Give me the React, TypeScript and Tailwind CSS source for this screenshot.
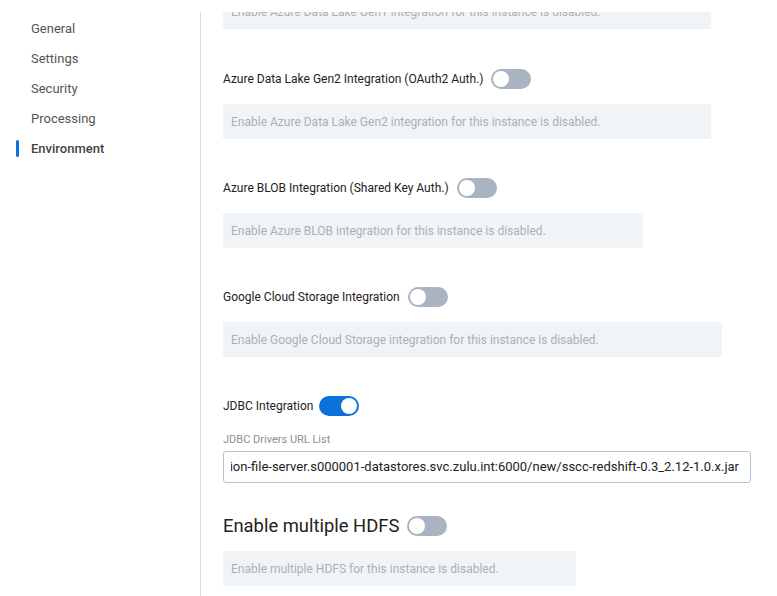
import React from "react";

const font = { fontFamily: "Roboto, 'Liberation Sans', sans-serif" };

function Toggle({ on = false }: { on?: boolean }) {
  return (
    <div
      className={
        "relative h-[20px] w-[40px] shrink-0 rounded-full " +
        (on ? "bg-[#0b72d9]" : "bg-[#a9b3c1]")
      }
    >
      <div
        className={
          "absolute top-[2px] h-[16px] w-[16px] rounded-full bg-white " +
          (on ? "left-[22px]" : "left-[2px]")
        }
      />
    </div>
  );
}

function Section({
  label,
  desc,
  boxW,
  big = false,
}: {
  label: string;
  desc: string;
  boxW: string;
  big?: boolean;
}) {
  return (
    <div className="flex flex-col">
      <div className="flex h-[20px] items-center gap-[8px]">
        <span
          className={
            big ? "text-[18.4px] text-[#222]" : "text-[12px] text-[#222]"
          }
        >
          {label}
        </span>
        <Toggle />
      </div>
      <div
        className={
          "mt-[15px] flex h-[35px] items-center bg-[#f1f4f7] px-[8px] text-[12px] text-[#abb0b8] " +
          boxW
        }
      >
        {desc}
      </div>
    </div>
  );
}

export default function App() {
  const items = ["General", "Settings", "Security", "Processing", "Environment"];
  return (
    <div className="flex h-[596px] w-[777px] overflow-hidden bg-white" style={font}>
      <div className="w-[200px] shrink-0 pt-[14px]">
        {items.map((it) => {
          const active = it === "Environment";
          return (
            <div key={it} className="relative flex h-[30px] items-center pl-[31px]">
              {active && (
                <div className="absolute left-[16px] top-[6px] h-[17px] w-[3px] rounded-full bg-[#0b72d9]" />
              )}
              <span
                className={
                  active
                    ? "text-[13px] font-medium text-[#444]"
                    : "text-[13px] text-[#555]"
                }
              >
                {it}
              </span>
            </div>
          );
        })}
      </div>
      <div className="mt-[12px] flex-1 border-l border-[#d6dde6] pl-[22px]">
        <div className="flex flex-col">
          <div className="relative h-[17px] w-[488px] overflow-hidden bg-[#f1f4f7]">
            <div className="absolute left-[8px] top-[-9px] whitespace-nowrap text-[12px] text-[#abb0b8]">
              Enable Azure Data Lake Gen1 integration for this instance is disabled.
            </div>
          </div>
          <div className="mt-[40px]">
            <Section
              label="Azure Data Lake Gen2 Integration (OAuth2 Auth.)"
              desc="Enable Azure Data Lake Gen2 integration for this instance is disabled."
              boxW="w-[488px]"
            />
          </div>
          <div className="mt-[39px]">
            <Section
              label="Azure BLOB Integration (Shared Key Auth.)"
              desc="Enable Azure BLOB integration for this instance is disabled."
              boxW="w-[420px]"
            />
          </div>
          <div className="mt-[39px]">
            <Section
              label="Google Cloud Storage Integration"
              desc="Enable Google Cloud Storage integration for this instance is disabled."
              boxW="w-[499px]"
            />
          </div>
          <div className="mt-[39px] flex flex-col">
            <div className="flex h-[20px] items-center gap-[6px]">
              <span className="text-[12px] text-[#222]">JDBC Integration</span>
              <Toggle on />
            </div>
            <div className="mt-[17px] text-[11px] leading-[14px] text-[#8a9099]">
              JDBC Drivers URL List
            </div>
            <div className="mt-[4px] flex h-[32px] w-[528px] items-center rounded-[3px] border border-[#b9c2cc] pl-[7px] pr-[11px]">
              <div className="flex min-w-0 flex-1 justify-end overflow-hidden">
                <span className="shrink-0 whitespace-nowrap text-[13px] text-[#222]">
                  https://sscc-extension-file-server.s000001-datastores.svc.zulu.int:6000/new/sscc-redshift-0.3_2.12-1.0.x.jar
                </span>
              </div>
            </div>
          </div>
          <div className="mt-[33px]">
            <Section
              big
              label="Enable multiple HDFS"
              desc="Enable multiple HDFS for this instance is disabled."
              boxW="w-[353px]"
            />
          </div>
        </div>
      </div>
    </div>
  );
}
